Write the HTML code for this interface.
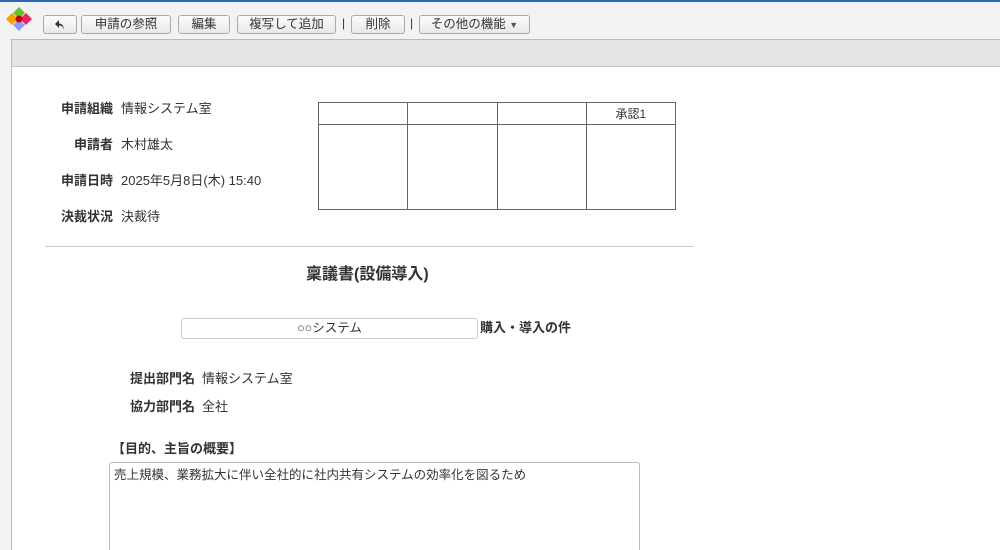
<!DOCTYPE html>
<html style="overflow:hidden"><head><meta charset="utf-8"><style>
*{box-sizing:border-box;margin:0;padding:0}
html,body{width:1000px;height:550px;overflow:hidden}
body{background:#f2f2f2;font-family:"Liberation Sans","Noto Sans CJK JP",sans-serif;font-size:13px;color:#333;position:relative}
.top{position:absolute;left:0;top:0;width:1000px;height:2px;background:#2a66b8}
.btn{position:absolute;top:15px;height:19px;border:1px solid #aaa;border-radius:3px;background:linear-gradient(#fbfbfb,#e8e8e8);font-size:12.5px;line-height:17px;text-align:center;color:#333}
.sep{position:absolute;top:16px;font-size:12px;color:#333}
.panel{position:absolute;left:11px;top:39px;width:989px;height:511px;background:#fff;border-left:1px solid #bbb;border-top:1px solid #bbb}
.bar{height:27px;background:#e5e5e5;border-bottom:1px solid #c4c4c4}
.t{position:absolute;white-space:nowrap;line-height:16px}
.b{font-weight:bold;color:#333}
</style></head><body>
<div class="top"></div>
<svg style="position:absolute;left:6px;top:7px" width="26" height="26" viewBox="0 0 26 26">
<path d="M13 0L19 6L13 12L7 6Z" fill="#6cbf2e"/><path d="M6 6L12 12L6 18L0 12Z" fill="#f5a000"/><path d="M20 6L26 12L20 18L14 12Z" fill="#e8285a"/><path d="M13 12L19 18L13 24L7 18Z" fill="#8f9df7"/><circle cx="13" cy="12" r="3.5" fill="#c00"/></svg>
<div class="btn" style="left:43px;width:34px"><svg width="12" height="12" viewBox="0 0 12 12" style="margin-top:3px"><path d="M5 1L1 5l4 4V6.5c3 0 4.5 1.5 5 4.5 0-4-2-6.5-5-6.5z" fill="#333"/></svg></div>
<div class="btn" style="left:81px;width:90px">申請の参照</div>
<div class="btn" style="left:178px;width:52px">編集</div>
<div class="btn" style="left:237px;width:99px">複写して追加</div>
<div class="sep" style="left:342px">|</div>
<div class="btn" style="left:351px;width:54px">削除</div>
<div class="sep" style="left:410px">|</div>
<div class="btn" style="left:419px;width:111px">その他の機能 <span style="font-size:9px;color:#555">▼</span></div>
<div class="panel"><div class="bar"></div></div>
<div class="t b" style="left:61px;top:101px">申請組織</div><div class="t" style="left:121px;top:101px">情報システム室</div>
<div class="t b" style="left:74px;top:137px">申請者</div><div class="t" style="left:121px;top:137px">木村雄太</div>
<div class="t b" style="left:61px;top:173px">申請日時</div><div class="t" style="left:121px;top:173px">2025年5月8日(木) 15:40</div>
<div class="t b" style="left:61px;top:209px">決裁状況</div><div class="t" style="left:121px;top:209px">決裁待</div>
<table style="position:absolute;left:318px;top:102px;width:358px;height:108px;border-collapse:collapse;font-size:12px">
<tr style="height:22px"><td style="border:1px solid #666;width:25%"></td><td style="border:1px solid #666;width:25%"></td><td style="border:1px solid #666;width:25%"></td><td style="border:1px solid #666;text-align:center">承認1</td></tr>
<tr><td style="border:1px solid #666"></td><td style="border:1px solid #666"></td><td style="border:1px solid #666"></td><td style="border:1px solid #666"></td></tr></table>
<div style="position:absolute;left:45px;top:246px;width:649px;height:1px;background:#ccc"></div>
<div class="t b" style="left:306px;top:266px;font-size:16px;line-height:18px">稟議書(設備導入)</div>
<div style="position:absolute;left:181px;top:318px;width:297px;height:21px;border:1px solid #ccc;border-radius:3px;text-align:center;line-height:19px;font-size:12.5px">○○システム</div>
<div class="t b" style="left:480px;top:320px;font-size:13px">購入・導入の件</div>
<div class="t b" style="left:130px;top:371px">提出部門名</div><div class="t" style="left:202px;top:371px">情報システム室</div>
<div class="t b" style="left:130px;top:399px">協力部門名</div><div class="t" style="left:202px;top:399px">全社</div>
<div class="t b" style="left:112px;top:441px">【目的、主旨の概要】</div>
<div style="position:absolute;left:109px;top:462px;width:531px;height:100px;border:1px solid #bbb;border-radius:3px;padding:1px 4px;font-size:12.5px">売上規模、業務拡大に伴い全社的に社内共有システムの効率化を図るため</div>
</body></html>
